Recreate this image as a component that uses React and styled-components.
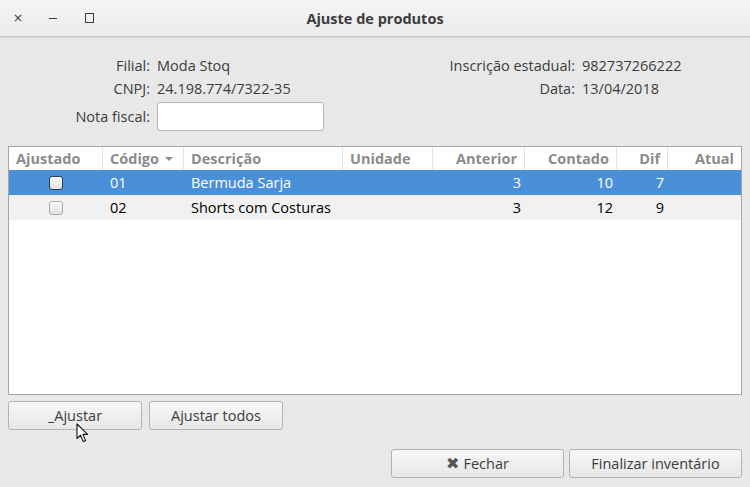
import React from "react";
import styled, { createGlobalStyle } from "styled-components";

const GlobalStyle = createGlobalStyle`
  html, body {
    margin: 0;
    padding: 0;
    background: #e8e8e8;
  }
  body {
    font-family: "Open Sans", "Noto Sans", sans-serif;
    font-size: 14.5px;
    color: #3c3c3c;
  }
`;

const columns = [
  { key: "ajustado", title: "Ajustado", width: 94, align: "left" },
  { key: "codigo", title: "Código", width: 81, align: "left", sorted: true },
  { key: "descricao", title: "Descrição", width: 159, align: "left" },
  { key: "unidade", title: "Unidade", width: 90, align: "left" },
  { key: "anterior", title: "Anterior", width: 92, align: "right" },
  { key: "contado", title: "Contado", width: 92, align: "right" },
  { key: "dif", title: "Dif", width: 51, align: "right" },
  { key: "atual", title: "Atual", width: 73, align: "right" },
];

const rows = [
  { codigo: "01", descricao: "Bermuda Sarja", unidade: "", anterior: "3", contado: "10", dif: "7", atual: "" },
  { codigo: "02", descricao: "Shorts com Costuras", unidade: "", anterior: "3", contado: "12", dif: "9", atual: "" },
];

const App = () => {
  return (
    <>
      <GlobalStyle />
      <Window>
        <TitleBar>
          <Controls>
            <Control>×</Control>
            <Control>
              <MinLine />
            </Control>
            <Control>
              <MaxBox />
            </Control>
          </Controls>
          <Title>Ajuste de produtos</Title>
        </TitleBar>

        <Body>
          <Info>
            <FieldGrid $labelWidth={142}>
              <Label>Filial:</Label>
              <Value>Moda Stoq</Value>
              <Label>CNPJ:</Label>
              <Value>24.198.774/7322-35</Value>
              <Label>Nota fiscal:</Label>
              <Entry />
            </FieldGrid>
            <FieldGrid $labelWidth={135}>
              <Label>Inscrição estadual:</Label>
              <Value>982737266222</Value>
              <Label>Data:</Label>
              <Value>13/04/2018</Value>
            </FieldGrid>
          </Info>

          <Table>
            <HeaderRow>
              {columns.map((col) => (
                <HeaderCell key={col.key} $width={col.width} $align={col.align}>
                  {col.title}
                  {col.sorted && <SortArrow />}
                </HeaderCell>
              ))}
            </HeaderRow>
            {rows.map((row, index) => (
              <Row key={row.codigo} $selected={index === 0} $odd={index % 2 === 1}>
                <CheckCell>
                  <Check $selected={index === 0} />
                </CheckCell>
                {columns.slice(1).map((col) => (
                  <Cell key={col.key} $width={col.width} $align={col.align}>
                    {row[col.key]}
                  </Cell>
                ))}
              </Row>
            ))}
          </Table>

          <ActionRow>
            <Button $width={134}>_Ajustar</Button>
            <Button $width={134}>Ajustar todos</Button>
          </ActionRow>

          <FooterRow>
            <Button $width={173}>
              <CloseIcon>✖</CloseIcon>Fechar
            </Button>
            <Button $width={173}>Finalizar inventário</Button>
          </FooterRow>
        </Body>

        <Cursor viewBox="0 0 13 20" width="13" height="20">
          <path
            d="M1 1 L1 15.5 L4.5 12.2 L7.3 18.6 L9.6 17.6 L6.9 11.4 L11.6 11.4 Z"
            fill="#ffffff"
            stroke="#111"
            strokeWidth="1.1"
            strokeLinejoin="round"
          />
        </Cursor>
      </Window>
    </>
  );
};

export default App;

const Window = styled.div`
  position: relative;
  width: 750px;
  height: 487px;
  background: #e8e8e8;
  overflow: hidden;
`;

const TitleBar = styled.div`
  position: relative;
  height: 36px;
  display: flex;
  align-items: center;
  justify-content: center;
  background: linear-gradient(#f4f4f4, #ececec);
  border-bottom: 1px solid #c2c2c2;
  box-shadow: 0 1px 0 #dadada;
`;

const Controls = styled.div`
  position: absolute;
  left: 10px;
  top: 0;
  height: 36px;
  display: flex;
  align-items: center;
  gap: 19px;
`;

const Control = styled.span`
  width: 16px;
  height: 16px;
  display: flex;
  justify-content: center;
  align-items: center;
  font-family: "DejaVu Sans", sans-serif;
  font-size: 12px;
  color: #3c3c3c;
`;

const MinLine = styled.span`
  width: 8px;
  height: 1px;
  background: #3c3c3c;
`;

const MaxBox = styled.span`
  width: 7px;
  height: 8px;
  border: 1px solid #3c3c3c;
  margin-left: 2px;
`;

const Title = styled.div`
  font-weight: 700;
  font-size: 14.5px;
  color: #3c3c3c;
`;

const Body = styled.div`
  padding: 17px 8px 0 8px;
  display: flex;
  flex-direction: column;
`;

const Info = styled.div`
  display: grid;
  grid-template-columns: 432px auto;
  align-items: start;
  height: 92px;
`;

const FieldGrid = styled.div`
  display: grid;
  grid-template-columns: ${({ $labelWidth }) => $labelWidth}px auto;
  column-gap: 7px;
  grid-auto-rows: 23px;
  align-items: center;

  & > :nth-child(5),
  & > :nth-child(6) {
    margin-top: 10px;
  }
`;

const Label = styled.div`
  text-align: right;
  white-space: nowrap;
  color: #3c3c3c;
`;

const Value = styled.div`
  white-space: nowrap;
  color: #3c3c3c;
`;

const Entry = styled.div`
  width: 165px;
  height: 27px;
  background: #ffffff;
  border: 1px solid #b6b6b6;
  border-radius: 3px;
`;

const Table = styled.div`
  height: 247px;
  background: #ffffff;
  border: 1px solid #a5a5a5;
  display: flex;
  flex-direction: column;
`;

const HeaderRow = styled.div`
  display: flex;
  height: 23px;
  background: #ffffff;
`;

const HeaderCell = styled.div`
  width: ${({ $width }) => $width}px;
  box-sizing: border-box;
  padding: 0 7px;
  display: flex;
  align-items: center;
  justify-content: ${({ $align }) => ($align === "right" ? "flex-end" : "flex-start")};
  font-weight: 700;
  color: #8b8b8b;
  white-space: nowrap;
  border-right: 1px solid #e4e4e4;

  &:last-child {
    border-right: none;
  }
`;

const SortArrow = styled.span`
  margin-left: 6px;
  margin-top: 1px;
  width: 0;
  height: 0;
  border-left: 4px solid transparent;
  border-right: 4px solid transparent;
  border-top: 4px solid #8b8b8b;
`;

const Row = styled.div`
  display: flex;
  height: 25px;
  background: ${({ $selected, $odd }) => ($selected ? "#4a90d9" : $odd ? "#f1f1f1" : "#ffffff")};
  color: ${({ $selected }) => ($selected ? "#ffffff" : "#000000")};
  font-weight: ${({ $selected }) => ($selected ? 400 : 500)};
`;

const Cell = styled.div`
  width: ${({ $width }) => $width}px;
  box-sizing: border-box;
  padding: 0 4px 0 7px;
  display: flex;
  align-items: center;
  justify-content: ${({ $align }) => ($align === "right" ? "flex-end" : "flex-start")};
  white-space: nowrap;
`;

const CheckCell = styled.div`
  width: 94px;
  display: flex;
  align-items: center;
  justify-content: center;
`;

const Check = styled.span`
  width: 12px;
  height: 12px;
  border-radius: 3px;
  border: 1px solid ${({ $selected }) => ($selected ? "#2c3e57" : "#a8a8a8")};
  background: linear-gradient(#fafafa, #e2e2e2);
`;

const ActionRow = styled.div`
  display: flex;
  gap: 7px;
  margin-top: 6px;
`;

const FooterRow = styled.div`
  display: flex;
  justify-content: flex-end;
  gap: 5px;
  margin-top: 19px;
`;

const Button = styled.div`
  width: ${({ $width }) => $width}px;
  height: 29px;
  box-sizing: border-box;
  display: flex;
  align-items: center;
  justify-content: center;
  border: 1px solid #b3b3b3;
  border-radius: 3px;
  background: linear-gradient(#f7f7f7, #e7e7e7);
  color: #3c3c3c;
  white-space: nowrap;
`;

const CloseIcon = styled.span`
  font-family: "DejaVu Sans", sans-serif;
  font-size: 16px;
  line-height: 1;
  color: #555555;
  margin-right: 4px;
`;

const Cursor = styled.svg`
  position: absolute;
  left: 76px;
  top: 423px;
`;
